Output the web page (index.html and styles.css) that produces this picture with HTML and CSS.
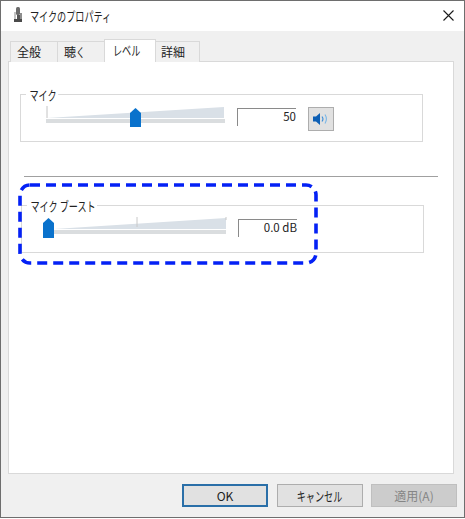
FILE: index.html
```html
<!DOCTYPE html>
<html lang="ja">
<head>
<meta charset="utf-8">
<title>マイクのプロパティ</title>
<link rel="stylesheet" href="styles.css">
</head>
<body>
<div class="window">
  <header class="titlebar">
    <svg class="title-icon" width="10" height="16" viewBox="0 0 10 16">
      <rect x="3" y="0" width="4" height="8" rx="1.5" fill="#6b6b6b"/>
      <rect x="4" y="8" width="3" height="4" fill="#555"/>
      <rect x="1" y="5" width="2" height="7" fill="#c4c4c4"/>
      <path d="M1 12h8v3H1z" fill="#4a4a4a"/>
      <path d="M7 6h2v6H7z" fill="#8d8d8d"/>
    </svg>
    <span class="title-text"><span class="kana">マイクのプロパティ</span></span>
    <svg class="close" width="11" height="11" viewBox="0 0 11 11"><path d="M.5.5l10 10M10.5.5l-10 10" stroke="#1a1a1a" stroke-width="1.1" fill="none"/></svg>
  </header>
  <div class="content">
    <nav class="tabs">
      <div class="tab tab-a">全般</div>
      <div class="tab tab-b">聴<span class="kana">く</span></div>
      <div class="tab tab-active"><span class="kana">レベル</span></div>
      <div class="tab tab-d">詳細</div>
    </nav>
    <main class="panel">
      <section class="group group-mic">
        <span class="group-label">マイク</span>
        <svg class="slider-mic" width="180" height="22" viewBox="0 0 180 22">
          <path d="M1 0v12" stroke="#c4c4c4" fill="none"/>
          <polygon points="1,12 178,1 178,12" fill="#d9e0e7"/>
          <rect x="0" y="13" width="179" height="4" fill="#dadddf"/>
          <polygon points="84,21 84,7 89.5,2 95,7 95,21" fill="#0a72cc"/>
        </svg>
        <div class="readout readout-mic">50</div>
        <div class="speaker">
          <svg width="16" height="14" viewBox="0 0 16 14">
            <polygon points="0,4.5 3,4.5 7,1 7,13 3,9.5 0,9.5" fill="#0d5fb5"/>
            <path d="M9 4.5q2 2.5 0 5" stroke="#3f8fd8" stroke-width="1.1" fill="none"/>
            <path d="M12 2.5q2.8 4.5 0 9" stroke="#78b6e8" stroke-width="1.1" fill="none"/>
          </svg>
        </div>
      </section>
      <hr class="separator">
      <section class="group group-boost">
        <span class="group-label">マイク ブースト</span>
        <svg class="slider-boost" width="184" height="23" viewBox="0 0 184 23">
          <polygon points="11,13 183,2 183,13" fill="#d9e0e7"/>
          <rect x="11" y="14" width="172" height="4" fill="#dadddf"/>
          <path d="M94 1v10" stroke="#c8c8c8" fill="none"/>
          <path d="M183 1v3" stroke="#c8c8c8" fill="none"/>
          <polygon points="0,22 0,7 5.5,2 11,7 11,22" fill="#0a72cc"/>
        </svg>
        <div class="readout readout-boost">0.0 dB</div>
      </section>
    </main>
    <footer class="actions">
      <button class="btn btn-default">OK</button>
      <button class="btn"><span class="kana kana-center">キャンセル</span></button>
      <button class="btn btn-disabled" disabled>適用(A)</button>
    </footer>
  </div>
  <svg class="annotation" width="302" height="84" viewBox="0 0 302 84">
    <rect x="2" y="2" width="296" height="78" rx="10" fill="none" stroke="#0421f5" stroke-width="3.6" stroke-dasharray="10 6"/>
  </svg>
</div>
</body>
</html>
```

FILE: styles.css
```css
* { box-sizing: border-box; }
html, body { margin: 0; padding: 0; background: #fff; }
body { font-family: "Noto Sans CJK JP", "Noto Sans", sans-serif; font-size: 12px; color: #222; }

.kana {
  display: inline-block;
  font-size: 13px;
  transform: scaleX(0.7);
  transform-origin: left center;
}
.kana-center { transform-origin: center; }

.window {
  position: relative;
  width: 465px;
  height: 518px;
  border: 1px solid #6e6e6e;
  display: flex;
  flex-direction: column;
  background: #fff;
}

.titlebar {
  height: 30px;
  flex: none;
  display: flex;
  align-items: center;
  padding: 0 10px 2px 12px;
  background: #fff;
}
.title-icon { flex: none; }
.title-text { margin-left: 7px; font-size: 12px; color: #222; flex: 1; }
.close { flex: none; }

.content {
  flex: 1;
  background: #f0f0f0;
  padding: 8px 0 0 7px;
  display: flex;
  flex-direction: column;
}

.tabs {
  height: 23px;
  flex: none;
  display: flex;
  align-items: flex-end;
  padding-left: 2px;
  position: relative;
  z-index: 1;
  margin-bottom: -1px;
}
.tab {
  height: 21px;
  background: #f0f0f0;
  border: 1px solid #d9d9d9;
  border-bottom: 0;
  margin-left: -1px;
  line-height: 20px;
  font-size: 12px;
  white-space: nowrap;
}
.tab-a { width: 48px; margin-left: 0; padding-left: 6px; }
.tab-b { width: 48px; padding-left: 6px; }
.tab-active {
  width: 52px;
  height: 23px;
  background: #fff;
  padding: 0 0 3px 8px;
}
.tab-d { width: 45px; padding-left: 5px; }

.panel {
  width: 446px;
  height: 413px;
  flex: none;
  background: #fff;
  border: 1px solid #d9d9d9;
  display: flex;
  flex-direction: column;
}

.group {
  position: relative;
  display: flex;
  align-items: flex-start;
  height: 48px;
  border: 1px solid #d9d9d9;
  flex: none;
}
.group-mic { width: 403px; margin: 32px 0 0 11px; }
.group-boost { width: 403px; margin: 28px 0 0 12px; }

.group-label {
  position: absolute;
  left: 5px;
  top: -7px;
  padding: 0 2px 0 5px;
  background: #fff;
  line-height: 14px;
  font-size: 13px;
  white-space: nowrap;
  transform: scaleX(0.7);
  transform-origin: left center;
}

.slider-mic { flex: none; margin: 11px 0 0 25px; }
.slider-boost { flex: none; margin: 10px 0 0 21px; }

.readout {
  width: 59px;
  height: 18px;
  flex: none;
  border-top: 1px solid #8a8a8a;
  border-left: 1px solid #8a8a8a;
  text-align: right;
  line-height: 15px;
  font-size: 11.5px;
  margin-top: 13px;
  margin-left: 11px;
}

.speaker {
  width: 26px;
  height: 24px;
  flex: none;
  margin: 12px 0 0 12px;
  background: #e1e1e1;
  border: 1px solid #adadad;
  display: flex;
  align-items: center;
  justify-content: center;
}

.separator {
  width: 414px;
  height: 1px;
  flex: none;
  margin: 34px 0 0 15px;
  border: 0;
  background: #a0a0a0;
}

.actions {
  display: flex;
  gap: 9px;
  padding-left: 174px;
  margin-top: 10px;
}
.btn {
  width: 86px;
  height: 23px;
  flex: none;
  background: #e1e1e1;
  border: 1px solid #adadad;
  font-family: inherit;
  font-size: 12px;
  color: #222;
  padding: 0;
  line-height: 20px;
}
.btn + .btn-disabled { margin-left: -1px; }
.btn-default { border: 2px solid #2a6fa8; }
.btn-disabled { background: #cccccc; border-color: #bfbfbf; color: #858585; }

.annotation {
  position: absolute;
  left: 17px;
  top: 182px;
}
```
